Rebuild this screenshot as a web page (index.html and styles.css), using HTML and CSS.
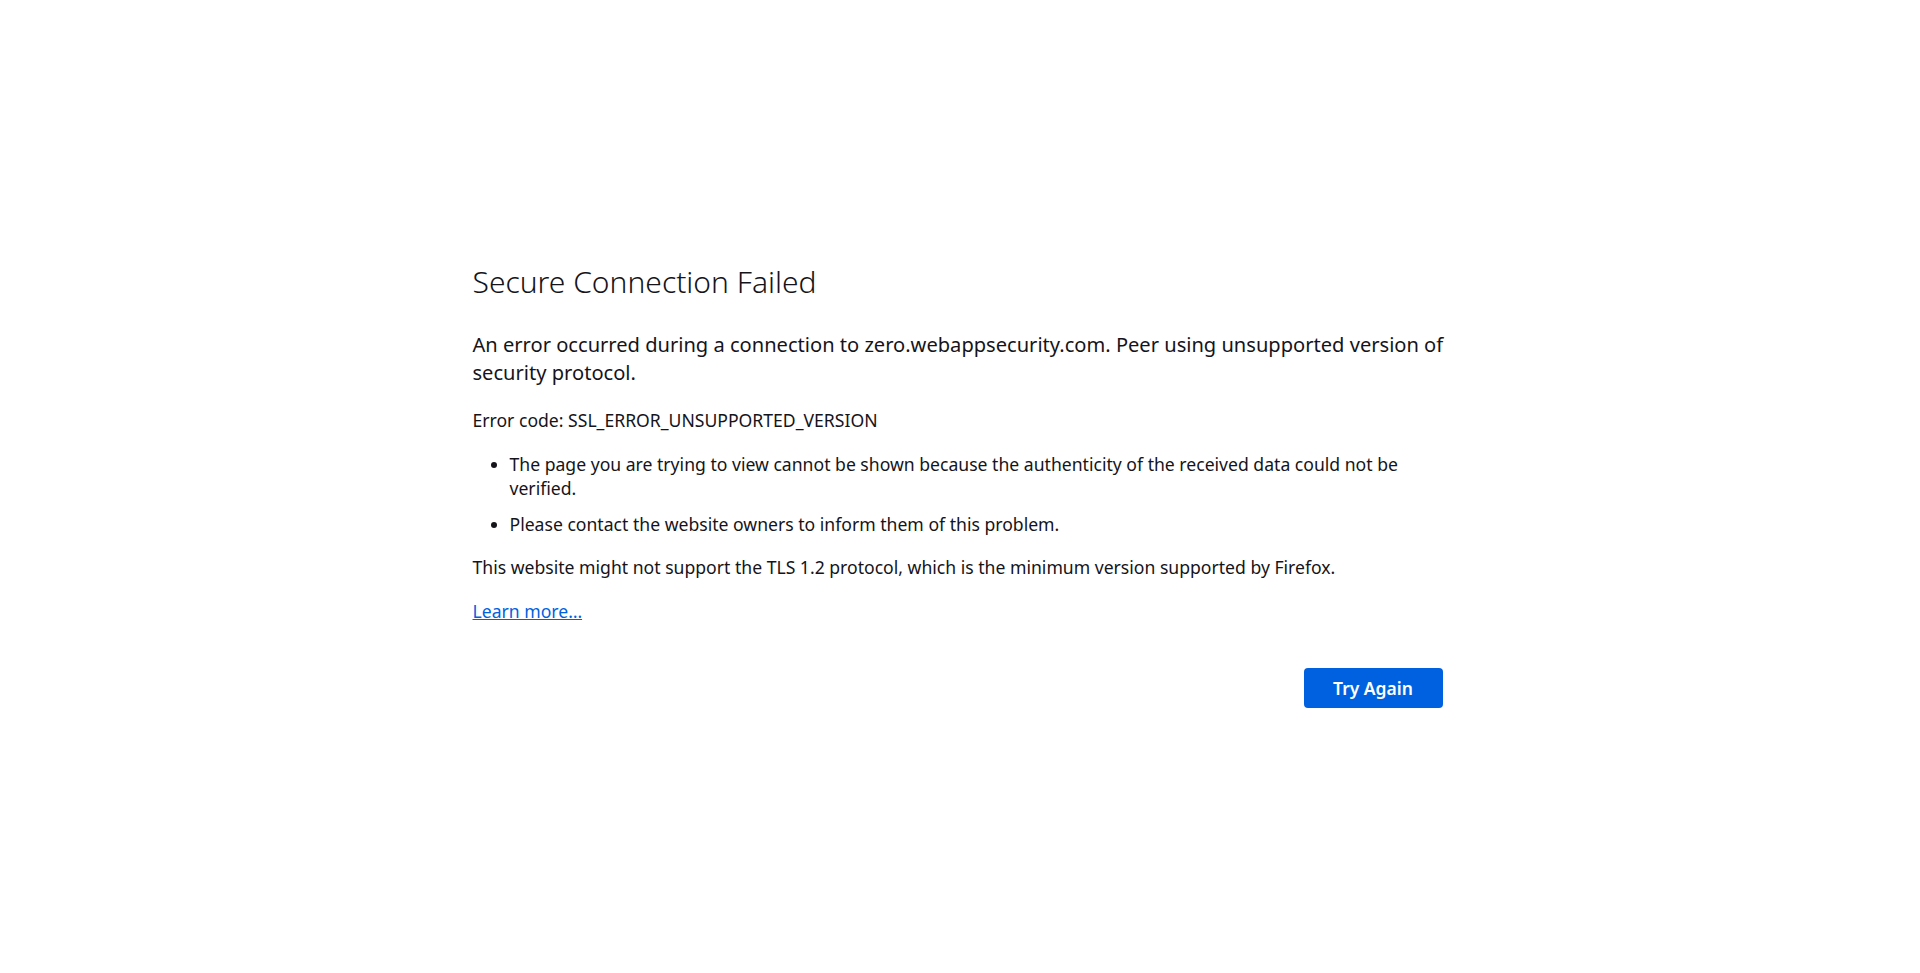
FILE: index.html
```html
<!DOCTYPE html>
<html lang="en">
<head>
<meta charset="utf-8">
<title>Problem loading page</title>
<link rel="stylesheet" href="styles.css">
</head>
<body>
<main class="container">
  <h1 class="title">Secure Connection Failed</h1>
  <p class="intro">An error occurred during a connection to zero.webappsecurity.com. Peer using unsupported version of security protocol.</p>
  <p class="code">Error code: SSL_ERROR_UNSUPPORTED_VERSION</p>
  <ul class="reasons">
    <li>The page you are trying to view cannot be shown because the authenticity of the received data could not be verified.</li>
    <li>Please contact the website owners to inform them of this problem.</li>
  </ul>
  <p class="note">This website might not support the TLS 1.2 protocol, which is the minimum version supported by Firefox.</p>
  <p class="learn"><a href="#" class="link">Learn more…</a></p>
  <div class="actions">
    <button class="primary" type="button">Try Again</button>
  </div>
</main>
</body>
</html>
```
FILE: styles.css
```css
html, body {
  margin: 0;
  background: #ffffff;
}
body {
  font-family: "Noto Sans", "Open Sans", sans-serif;
  color: #15141a;
  font-size: 17.6px;
  line-height: 24.5px;
}
.container {
  width: 975px;
  margin: 0 auto;
  padding-top: 261.5px;
}
.title {
  margin: 0;
  font-size: 30px;
  line-height: 40px;
  font-weight: 300;
}
.intro {
  margin: 29.7px 0 0;
  font-size: 20.1px;
  line-height: 28px;
}
.code {
  margin: 20.5px 0 0;
}
.reasons {
  margin: 19.5px 0 0;
  padding-left: 37px;
}
.reasons li + li {
  margin-top: 11px;
}
.note {
  margin: 19.3px 0 0;
}
.learn {
  margin: 19.2px 0 0;
}
.link {
  color: #0061e0;
  text-decoration: underline;
}
.actions {
  display: flex;
  justify-content: flex-end;
  padding-right: 5px;
  margin-top: 44.1px;
}
.primary {
  width: 139px;
  height: 40px;
  border: none;
  border-radius: 4px;
  background: #0061e0;
  color: #ffffff;
  font-family: "Noto Sans", "Open Sans", sans-serif;
  font-size: 17.5px;
  font-weight: 600;
  padding: 0;
  cursor: pointer;
}
```
